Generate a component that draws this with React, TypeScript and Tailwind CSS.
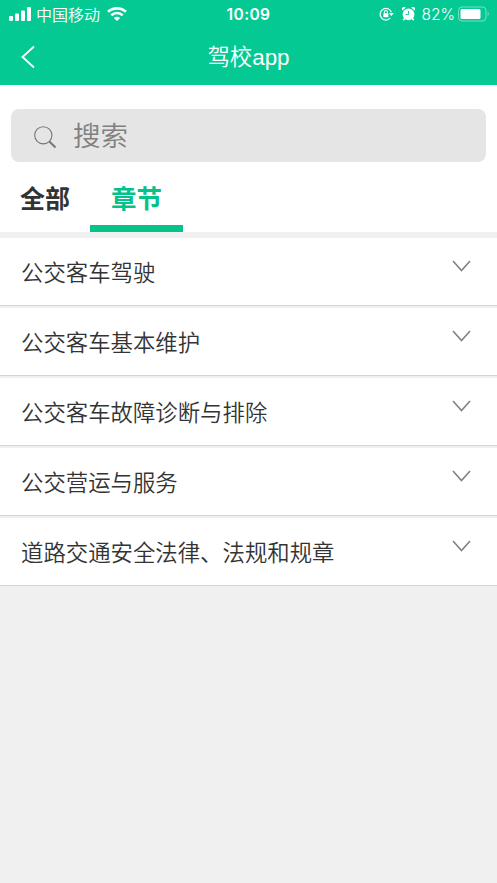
import React from "react";

const chapters = [
  { id: 1, title: "公交客车驾驶" },
  { id: 2, title: "公交客车基本维护" },
  { id: 3, title: "公交客车故障诊断与排除" },
  { id: 4, title: "公交营运与服务" },
  { id: 5, title: "道路交通安全法律、法规和规章" },
];

function StatusBar() {
  return (
    <div className="grid grid-cols-3 items-center h-7 pl-[9px] pr-[7px]">
      <div className="flex items-center">
        {/* Signal strength */}
        <svg className="-mt-px" width="22" height="14" viewBox="0 0 22 14" fill="white">
          <rect x="0" y="9" width="4" height="5" rx="1" />
          <rect x="6" y="6.5" width="4" height="7.5" rx="1" />
          <rect x="12" y="3.5" width="4" height="10.5" rx="1" />
          <rect x="18" y="0" width="4" height="14" rx="1" />
        </svg>
        <span className="-mt-0.5 ml-[5px] text-[16px] leading-7 whitespace-nowrap font-[350]">中国移动</span>
        {/* Wifi */}
        <svg className="-mt-px ml-[7px]" width="20" height="14" viewBox="0 0 20 14" fill="none" stroke="white" strokeWidth="2.6">
          <path d="M1 4.8C6 .2 14 .2 19 4.8" />
          <path d="M4.3 8.3C7.5 5.3 12.5 5.3 15.7 8.3" />
          <path d="M10 14L6.8 10.9C8.6 9.3 11.4 9.3 13.2 10.9Z" fill="white" stroke="none" />
        </svg>
      </div>

      <span className="mt-px pr-0.5 text-center text-[15.5px] leading-7 font-semibold tracking-[0.4px] font-['Inter','Liberation_Sans',sans-serif]">
        10:09
      </span>

      <div className="flex items-center justify-end">
        {/* Rotation lock */}
        <svg className="-mt-px shrink-0" width="15" height="14" viewBox="0 0 15 14" fill="none" stroke="white" strokeWidth="1.2">
          <path d="M11.2 11.2A5.8 5.8 0 1 1 12.4 5.2" />
          <path d="M10 6H14.8L12.4 9Z" fill="white" stroke="none" />
          <rect x="4.4" y="6.2" width="5" height="4" rx="0.5" fill="white" stroke="none" />
          <path d="M5.4 6.3V5A1.5 1.5 0 0 1 8.4 5V6.3" />
        </svg>
        {/* Alarm */}
        <svg className="-mt-0.5 ml-2 mr-px shrink-0" width="13" height="14" viewBox="0 0 13 14" fill="white">
          <circle cx="6.5" cy="7.3" r="5.9" />
          <path d="M0.3 3.6A2 2 0 0 1 3.6 0.7ZM12.7 3.6A2 2 0 0 0 9.4 0.7Z" />
          <path d="M2.8 11.3L1.3 13.3M10.2 11.3L11.7 13.3" stroke="white" strokeWidth="1.5" />
          <path d="M6.5 4V7.5H3.5" fill="none" stroke="#05c993" strokeWidth="0.9" />
        </svg>
        <span className="mt-px ml-[5px] text-[15.5px] leading-7 font-['Inter','Liberation_Sans',sans-serif] font-light">82%</span>
        <svg className="-mt-px ml-[3px] shrink-0" width="32" height="16" viewBox="0 0 32 16" fill="none">
          <rect x="0.5" y="1" width="27.5" height="14" rx="3.5" stroke="white" strokeOpacity="0.45" />
          <rect x="2.5" y="3" width="20" height="10" rx="1.5" fill="white" />
          <path d="M29.7 5.7C31.2 6.3 31.2 9.3 29.7 9.9Z" fill="white" fillOpacity="0.45" />
        </svg>
      </div>
    </div>
  );
}

function NavBar() {
  return (
    <div className="grid grid-cols-[60px_1fr_60px] items-center h-[57px]">
      <button className="pl-[21px]" aria-label="返回">
        <svg width="14" height="24" viewBox="0 0 14 24" fill="none" stroke="white" strokeWidth="1.8">
          <path d="M13 1.5L1.5 12L13 22.5" />
        </svg>
      </button>
      <h1 className="-mt-px text-center text-[22.4px] leading-8 font-[350]">
        驾校<span className="font-['Liberation_Sans',sans-serif] font-normal">app</span>
      </h1>
    </div>
  );
}

export default function App() {
  return (
    <div className="min-h-screen bg-[#f0f0f0] text-[#333333] font-['Noto_Sans_CJK_SC',sans-serif]">
      <header className="h-[85px] bg-[#05c993] text-white">
        <StatusBar />
        <NavBar />
      </header>

      <div className="h-[147px] bg-white pt-6">
        {/* Search */}
        <div className="flex items-center h-[53px] mx-[11px] pl-[23px] rounded-[8px] bg-[#e5e5e5]">
          <svg className="mt-1" width="23" height="23" viewBox="0 0 23 23" fill="none" stroke="#777777">
            <circle cx="9.3" cy="9.3" r="8.6" strokeWidth="1.1" />
            <path d="M15.3 15.5L21.5 21.5" strokeWidth="2" />
          </svg>
          <span className="-mt-0.5 ml-4 text-[27.5px] leading-[53px] font-[350] text-[#808080]">搜索</span>
        </div>

        {/* Tabs */}
        <div className="flex h-[70px] text-[25px] leading-[70px] font-bold">
          <button className="w-[90px] h-[70px]">全部</button>
          <button className="w-[93px] h-[70px] border-b-7 border-[#05c18a] text-[25.5px] text-[#05c18a]">章节</button>
        </div>
      </div>

      <ul className="pt-[6px] space-y-[2px]">
        {chapters.map((chapter) => (
          <li
            key={chapter.id}
            className="flex justify-between h-[68px] pl-[21px] pr-[26px] bg-white border-b border-[#d5d5d5]"
          >
            <span className="text-[22.4px] leading-[66px] font-[350]">{chapter.title}</span>
            <svg className="mt-[22px]" width="19" height="12" viewBox="0 0 19 12" fill="none" stroke="#808080" strokeWidth="1.6">
              <path d="M1 1L9.5 10.5L18 1" />
            </svg>
          </li>
        ))}
      </ul>
    </div>
  );
}
